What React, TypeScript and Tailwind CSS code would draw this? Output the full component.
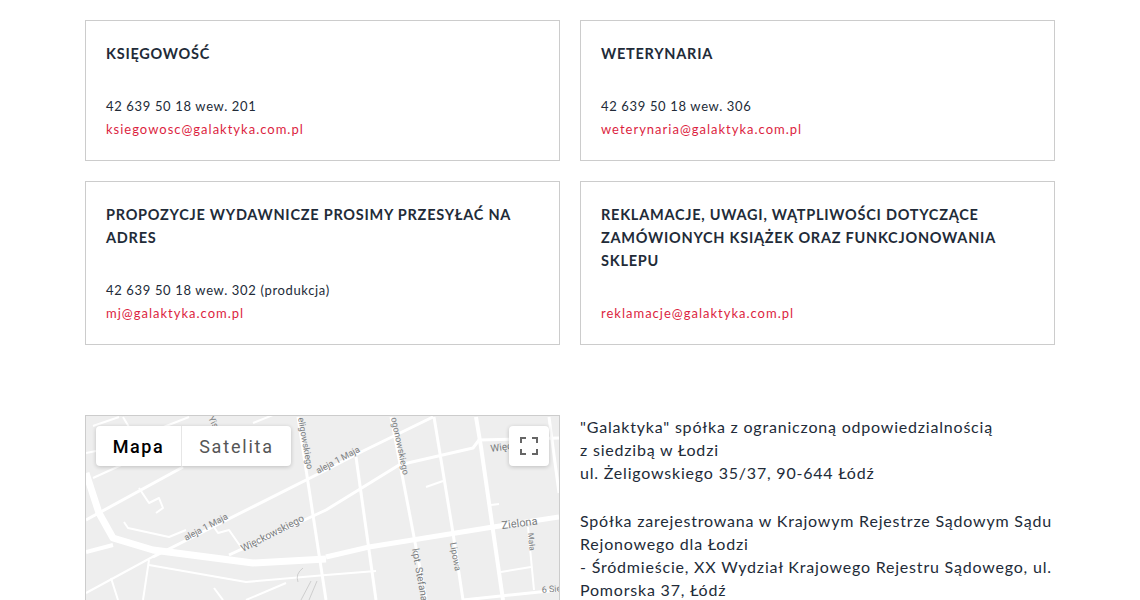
const roads: { d: string; w: number }[] = [
  { d: "M0 57L13 97L27 122L67 134L167 147L240 143", w: 7 },
  { d: "M240 141L283 131L407 111L473 101", w: 5 },
  { d: "M67 141L240 54L273 37L347 1", w: 3 },
  { d: "M143 139L240 94L313 49L387 32L393 24L473 22", w: 3 },
  { d: "M212 1L240 184", w: 3 },
  { d: "M305 1L328 121L340 184", w: 3 },
  { d: "M348 1L367 117L377 184", w: 3 },
  { d: "M390 1L395 31L417 184", w: 4 },
  { d: "M463 1L473 77", w: 3 },
  { d: "M270 41L290 184", w: 3 },
  { d: "M442 111L448 174", w: 2 },
  { d: "M377 184L473 174", w: 3 },
  { d: "M415 156L445 151", w: 2 },
  { d: "M340 71L357 65", w: 2 },
  { d: "M405 89L413 88", w: 2 },
  { d: "M0 104L97 51", w: 3 },
  { d: "M7 62L53 41", w: 2 },
  { d: "M7 10L33 1", w: 2 },
  { d: "M37 1L43 11", w: 2 },
  { d: "M0 37L10 35", w: 2 },
  { d: "M53 72L63 87L73 82L77 92L70 97", w: 2 },
  { d: "M38 106L42 112L83 121L100 114", w: 2 },
  { d: "M128 111L132 117L143 114L157 134", w: 2 },
  { d: "M0 136L27 129", w: 4 },
  { d: "M0 177L70 139", w: 2 },
  { d: "M63 149L160 166L240 159L290 155", w: 2 },
  { d: "M63 144L57 184", w: 2 },
  { d: "M25 162L32 184", w: 2 },
  { d: "M128 172L137 184", w: 2 },
  { d: "M160 184L200 167", w: 2 },
  { d: "M167 7L187 -1", w: 2 },
  { d: "M70 14L103 1", w: 2 },
];

const labels = [
  { t: "aleja 1 Maja", x: 100, y: 125, r: -28, s: 9 },
  { t: "Więckowskiego", x: 157, y: 136, r: -27, s: 10 },
  { t: "aleja 1 Maja", x: 232, y: 58, r: -28, s: 9 },
  { t: "eligowskiego", x: 212, y: 2, r: 80, s: 9 },
  { t: "ogonowskiego", x: 305, y: 2, r: 78, s: 9 },
  { t: "Yis", x: 122, y: 2, r: 62, s: 9 },
  { t: "Więc", x: 405, y: 36, r: -8, s: 10 },
  { t: "Zielona", x: 416, y: 113, r: -7, s: 11 },
  { t: "Lipowa", x: 364, y: 127, r: 80, s: 9 },
  { t: "kpt. Stefana", x: 326, y: 133, r: 80, s: 10 },
  { t: "Mała", x: 442, y: 117, r: 85, s: 8 },
  { t: "6 Sie", x: 456, y: 177, r: -5, s: 9 },
];

const MapPanel = () => (
  <div className="relative h-[300px] border border-[#cccccc] bg-[#eeeeee] overflow-hidden">
    <svg width="475" height="300" viewBox="0 0 475 300" className="block">
      {roads.map((r) => (
        <path key={r.d} d={r.d} fill="none" stroke="#ffffff" strokeWidth={r.w} strokeLinejoin="round" />
      ))}
      <path d="M217 152Q209 158 212 166M225 165L215 184M231 165L223 184" fill="none" stroke="#b9b9b9" strokeWidth="0.6" />
      {labels.map((l) => (
        <text
          key={l.t + l.x}
          x={l.x}
          y={l.y}
          fontSize={l.s}
          fill="#7a7d80"
          fontFamily="Roboto, sans-serif"
          transform={`rotate(${l.r} ${l.x} ${l.y})`}
        >
          {l.t}
        </text>
      ))}
    </svg>

    <div className="absolute top-[10px] left-[10px] flex h-10 bg-white rounded-sm shadow-[0_1px_4px_rgba(0,0,0,0.2)] font-['Roboto',sans-serif] text-[18px] tracking-[1.5px]">
      <div className="flex items-center justify-center w-[86px] font-medium text-black border-r border-[#e6e6e6]">Mapa</div>
      <div className="flex items-center justify-center w-[109px] tracking-[1.8px] text-[#565656]">Satelita</div>
    </div>

    <div className="absolute top-[10px] right-[10px] flex items-center justify-center w-10 h-10 bg-white rounded-sm shadow-[0_1px_4px_rgba(0,0,0,0.2)]">
      <svg width="18" height="18" viewBox="0 0 18 18" fill="#666666">
        <path d="M0 0h6v2H2v4H0zM12 0h6v6h-2V2h-4zM0 12h2v4h4v2H0zM16 12h2v6h-6v-2h4z" />
      </svg>
    </div>
  </div>
);

type CardProps = {
  title: string;
  phone?: string;
  note?: string;
  email: string;
};

const Card = ({ title, phone, note, email }: CardProps) => (
  <div className="px-5 pt-[21px] pb-[19px] border border-[#cccccc]">
    <h3 className="mb-[30px] text-[14.5px] font-bold uppercase leading-[23px] tracking-[0.75px] text-[#222b38]">{title}</h3>
    {phone && (
      <p className="text-[13px] leading-[23px] tracking-[0.65px] text-[#222b38]">
        {phone}
        {note && <span> {note}</span>}
      </p>
    )}
    <a className="block text-[13px] leading-[23px] tracking-[1px] text-[#dc1f3f]">{email}</a>
  </div>
);

export default function App() {
  return (
    <main className="h-[600px] overflow-hidden bg-white font-['Lato',sans-serif]">
      <div className="w-[970px] ml-[85px] pt-5">
        <div className="grid grid-cols-2 gap-5">
          <Card title="Księgowość" phone="42 639 50 18 wew. 201" email="ksiegowosc@galaktyka.com.pl" />
          <Card title="Weterynaria" phone="42 639 50 18 wew. 306" email="weterynaria@galaktyka.com.pl" />
          <Card
            title="Propozycje wydawnicze prosimy przesyłać na adres"
            phone="42 639 50 18 wew. 302"
            note="(produkcja)"
            email="mj@galaktyka.com.pl"
          />
          <Card
            title="Reklamacje, uwagi, wątpliwości dotyczące zamówionych książek oraz funkcjonowania sklepu"
            email="reklamacje@galaktyka.com.pl"
          />
        </div>

        <div className="grid grid-cols-2 gap-5 mt-[70px]">
          <MapPanel />
          <div className="text-base leading-[23.2px] tracking-[0.8px] text-[#222b38]">
            <p>
              "Galaktyka" spółka z ograniczoną odpowiedzialnością
              <br />
              z siedzibą w Łodzi
              <br />
              ul. Żeligowskiego 35/37, 90-644 Łódź
            </p>
            <p className="mt-[24px]">
              Spółka zarejestrowana w Krajowym Rejestrze Sądowym Sądu Rejonowego dla Łodzi
              <br />
              - Śródmieście, XX Wydział Krajowego Rejestru Sądowego, ul. Pomorska 37, Łódź
            </p>
          </div>
        </div>
      </div>
    </main>
  );
}
